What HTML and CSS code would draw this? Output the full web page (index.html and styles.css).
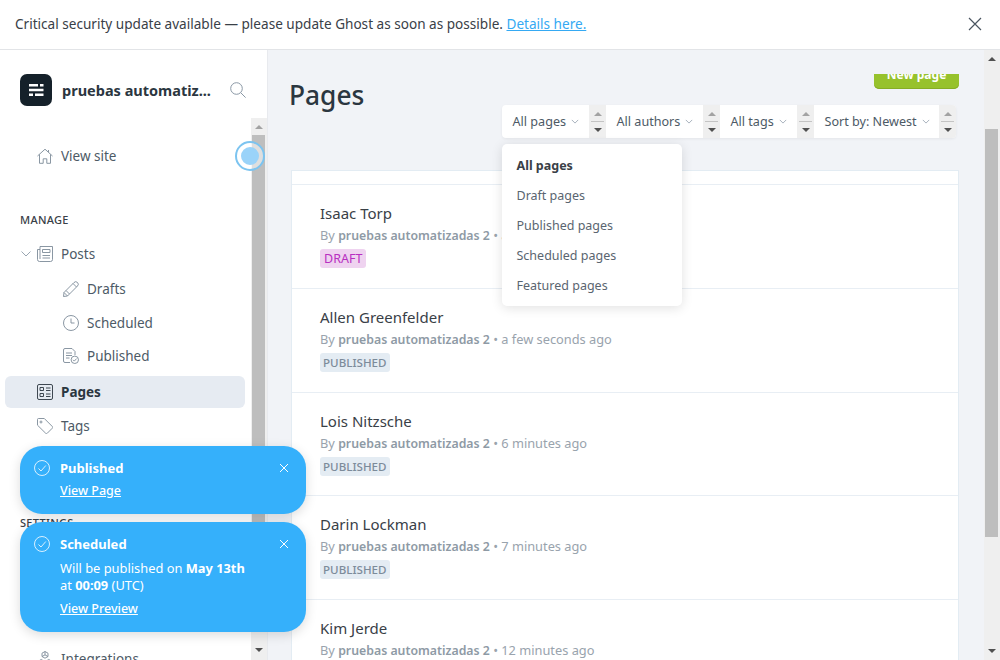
FILE: index.html
```html
<!DOCTYPE html>
<html lang="en">
<head>
<meta charset="utf-8">
<title>Pages</title>
<link rel="stylesheet" href="styles.css">
</head>
<body>
<div class="app">
  <div class="banner">
    <p class="banner-text">Critical security update available — please update Ghost as soon as possible. <a href="#">Details here.</a></p>
    <svg class="banner-close" viewBox="0 0 14 14"><path d="M1 1l12 12M13 1L1 13"/></svg>
  </div>
  <div class="shell">
    <aside class="sidebar">
      <div class="brand">
        <div class="logo"><svg viewBox="0 0 32 32"><path d="M9 10h9v2.4H9zM20 10h3.5v2.4H20zM9 14.8h14.5v2.4H9zM9 19.6h4v2.4H9zM15 19.6h8.5v2.4H15z"/></svg></div>
        <span class="brand-name">pruebas automatiz...</span>
        <svg class="search" viewBox="0 0 16 16"><circle cx="6.5" cy="6.5" r="5.8"/><path d="M10.8 10.8l4.8 4.8"/></svg>
      </div>
      <div class="side-scroll">
        <nav class="nav">
          <a class="item view-site"><svg class="ico" viewBox="0 0 16 16"><path d="M.5 8L8 1.2 15.500 8M2.500 6.500v8.800h3.700v-4.500h3.600v4.500h3.700V6.500M11.500 2v2"/></svg>View site</a>
          <div class="label">MANAGE</div>
          <a class="item"><svg class="caret" viewBox="0 0 10 6"><path d="M.5.5L5 5 9.500.5"/></svg><svg class="ico" viewBox="0 0 16 16"><path d="M3 .5h12.500v13a2 2 0 0 1-2 2h-11a2 2 0 0 1-2-2V3.500H3M3 .5v12.500M5.500 3.500h7.500v3h-7.500zM5.500 9.500h7.500M5.500 12h7.500"/></svg>Posts</a>
          <a class="item sub"><svg class="ico" viewBox="0 0 16 16"><path d="M1 11.500L11 1.500a1.800 1.800 0 0 1 3.500 3.500L4.500 15 .5 15.500zM10 2.500l3.500 3.500M1 11.500l3.500 3.500M3 9.500l3.500 3.500"/></svg>Drafts</a>
          <a class="item sub"><svg class="ico" viewBox="0 0 16 16"><circle cx="8" cy="8" r="7.500"/><path d="M8 3.500V8h3.500"/></svg>Scheduled</a>
          <a class="item sub"><svg class="ico" viewBox="0 0 16 16"><path d="M7 14.500H2a1.500 1.500 0 0 1-1.500-1.500V2A1.500 1.500 0 0 1 2 .5h7L12 3.500V7M3 5h6M3 7.500h6M3 10h3.500"/><circle cx="11.800" cy="11.800" r="3.700"/><path d="M10 11.800l1.300 1.300 2.300-2.500"/></svg>Published</a>
          <a class="item active"><svg class="ico" viewBox="0 0 16 16"><rect x=".5" y=".5" width="15" height="15" rx="1.500"/><path d="M3 3.500h3.500v3H3zM3 9.500h3.500v3H3zM9 4h4.500M9 6.500h4.500M9 10h4.500M9 12.500h4.500"/></svg>Pages</a>
          <a class="item"><svg class="ico" viewBox="0 0 16 16"><path d="M.5 1.500a1 1 0 0 1 1-1h5.800l8 8a1.200 1.200 0 0 1 0 1.700l-5 5a1.200 1.200 0 0 1-1.700 0l-8.100-8z"/><circle cx="4" cy="4" r="1"/></svg>Tags</a>
          <div class="label label-settings">SETTINGS</div>
          <a class="item"><svg class="ico" viewBox="0 0 16 16"><path d="M8 .5l3 1.700v3.300L8 7.200 5 5.500V2.200zM5 5.500l3-1.600 3 1.600M8 3.900V.5M4.200 8.500l3 1.700v3.300l-3 1.700-3-1.700v-3.300zM11.800 8.500l3 1.700v3.300l-3 1.700-3-1.700v-3.300z"/></svg>Integrations</a>
        </nav>
        <div class="scrollbar scrollbar-side">
          <span class="arrow-up faded"></span>
          <div class="track track-side"><div class="thumb"></div></div>
          <span class="arrow-down"></span>
        </div>
      </div>
    </aside>
    <main class="main">
      <div class="content">
        <div class="head">
          <h1 class="title">Pages</h1>
          <div class="actions">
            <div class="new-clip"><button class="new-page">New page</button></div>
            <div class="filters">
              <div class="filter f-pages"><span>All pages</span><svg class="chev" viewBox="0 0 10 6"><path d="M1 1l4 4 4-4"/></svg></div>
              <div class="spin"><span class="arrow-up faded"></span><i class="spin-line"></i><span class="arrow-down"></span></div>
              <div class="filter f-authors"><span>All authors</span><svg class="chev" viewBox="0 0 10 6"><path d="M1 1l4 4 4-4"/></svg></div>
              <div class="spin"><span class="arrow-up faded"></span><i class="spin-line"></i><span class="arrow-down"></span></div>
              <div class="filter f-tags"><span>All tags</span><svg class="chev" viewBox="0 0 10 6"><path d="M1 1l4 4 4-4"/></svg></div>
              <div class="spin"><span class="arrow-up faded"></span><i class="spin-line"></i><span class="arrow-down"></span></div>
              <div class="filter f-sort"><span>Sort by: Newest</span><svg class="chev" viewBox="0 0 10 6"><path d="M1 1l4 4 4-4"/></svg></div>
              <div class="spin"><span class="arrow-up faded"></span><i class="spin-line"></i><span class="arrow-down"></span></div>
            </div>
          </div>
        </div>
        <div class="list">
          <div class="list-top"></div>
          <article class="row">
            <h3 class="row-title">Isaac Torp</h3>
            <p class="meta">By <b>pruebas automatizadas 2</b> • a few seconds ago</p>
            <span class="tag draft">DRAFT</span>
          </article>
          <article class="row">
            <h3 class="row-title">Allen Greenfelder</h3>
            <p class="meta">By <b>pruebas automatizadas 2</b> • a few seconds ago</p>
            <span class="tag">PUBLISHED</span>
          </article>
          <article class="row">
            <h3 class="row-title">Lois Nitzsche</h3>
            <p class="meta">By <b>pruebas automatizadas 2</b> • 6 minutes ago</p>
            <span class="tag">PUBLISHED</span>
          </article>
          <article class="row">
            <h3 class="row-title">Darin Lockman</h3>
            <p class="meta">By <b>pruebas automatizadas 2</b> • 7 minutes ago</p>
            <span class="tag">PUBLISHED</span>
          </article>
          <article class="row">
            <h3 class="row-title">Kim Jerde</h3>
            <p class="meta">By <b>pruebas automatizadas 2</b> • 12 minutes ago</p>
            <span class="tag">PUBLISHED</span>
          </article>
        </div>
      </div>
      <div class="scrollbar scrollbar-main">
        <span class="arrow-up"></span>
        <div class="track track-main"><div class="thumb"></div></div>
        <span class="arrow-down"></span>
      </div>
    </main>
  </div>

  <div class="dropdown">
    <a class="dd-item selected">All pages</a>
    <a class="dd-item">Draft pages</a>
    <a class="dd-item">Published pages</a>
    <a class="dd-item">Scheduled pages</a>
    <a class="dd-item">Featured pages</a>
  </div>

  <div class="cursor"><div class="cursor-dot"></div></div>

  <div class="toasts">
    <div class="toast">
      <svg class="toast-check" viewBox="0 0 16 16"><circle cx="8" cy="8" r="7.500"/><path d="M4.500 8.500l2.500 2.500 4.800-5.500"/></svg>
      <div class="toast-body">
        <div class="toast-title">Published</div>
        <a class="toast-link" href="#">View Page</a>
      </div>
      <svg class="toast-close" viewBox="0 0 10 10"><path d="M1 1l8 8M9 1L1 9"/></svg>
    </div>
    <div class="toast toast-tall">
      <svg class="toast-check" viewBox="0 0 16 16"><circle cx="8" cy="8" r="7.500"/><path d="M4.500 8.500l2.500 2.500 4.800-5.500"/></svg>
      <div class="toast-body">
        <div class="toast-title">Scheduled</div>
        <p class="toast-msg">Will be published on <b>May 13th</b><br>at <b>00:09</b> (UTC)</p>
        <a class="toast-link" href="#">View Preview</a>
      </div>
      <svg class="toast-close" viewBox="0 0 10 10"><path d="M1 1l8 8M9 1L1 9"/></svg>
    </div>
  </div>
</div>
</body>
</html>
```
FILE: styles.css
```css
* { box-sizing: border-box; }
html, body { margin: 0; padding: 0; height: 100%; overflow: hidden; }
body { font-family: "Noto Sans", "Open Sans", sans-serif; color: #394047; background: #fff; }
p, h1, h3 { margin: 0; }
a { color: inherit; text-decoration: none; }

.app { position: relative; width: 1000px; height: 660px; overflow: hidden; display: flex; flex-direction: column; }

/* banner */
.banner { height: 50px; flex: none; display: flex; align-items: center; justify-content: space-between; padding: 0 18px 2px 15px; border-bottom: 1px solid #e2e4e7; background: #fff; }
.banner-text { font-size: 13.580px; color: #394047; }
.banner-text a { color: #35a9f3; text-decoration: underline; }
.banner-close { width: 14px; height: 14px; fill: none; stroke: #4a5560; stroke-width: 1.2; }

.shell { flex: 1; display: flex; min-height: 0; }

/* sidebar */
.sidebar { width: 268px; flex: none; display: flex; flex-direction: column; background: #fff; border-right: 1px solid #e8eaee; }
.brand { height: 68px; flex: none; display: flex; align-items: center; padding: 12px 0 0 20px; }
.logo { width: 32px; height: 32px; background: #15212a; border-radius: 7px; flex: none; }
.logo svg { display: block; width: 32px; height: 32px; fill: #fff; }
.brand-name { margin-left: 10px; font-size: 14.5px; font-weight: 700; color: #2b3640; white-space: nowrap; width: 168px; }
.search { width: 16px; height: 16px; flex: none; fill: none; stroke: #8a98a5; stroke-width: 1; }

.side-scroll { flex: 1; min-height: 0; display: flex; }
.nav { flex: 1; min-width: 0; overflow: hidden; padding: 22px 6px 0 5px; }
.item { position: relative; display: flex; align-items: center; height: 32px; padding-left: 32px; font-size: 13.5px; color: #4d5a66; margin-bottom: 2px; border-radius: 6px; }
.item.sub { padding-left: 58px; height: 32px; margin-bottom: 1.5px; }
.item.active { background: #e6ebf2; font-weight: 700; color: #2b3640; margin-top: 3.500px; }
.ico { width: 16px; height: 16px; flex: none; margin-right: 8px; fill: none; stroke: #7d8b98; stroke-width: .9; }
.active .ico { stroke: #2b3640; }
.caret { position: absolute; left: 16px; top: 13px; width: 10px; height: 6px; fill: none; stroke: #9aa6b2; stroke-width: 1; }
.view-site { margin-bottom: 41px; }
.label { height: 14px; line-height: 14px; margin: 0 0 11px 15px; font-size: 11px; font-weight: 500; letter-spacing: .3px; color: #394047; }
.nav > .item:nth-of-type(2) { margin-bottom: 3px; }
.label-settings { margin-top: 74px; margin-bottom: 113px; }

/* scrollbars */
.scrollbar { flex: none; width: 16px; background: #efefef; display: flex; flex-direction: column; align-items: center; }
.track { flex: 1; min-height: 0; width: 100%; display: flex; flex-direction: column; padding: 0 2px 0 1px; }
.track-side { margin: 6px 0 5px; }
.thumb { background: #bebebe; }
.track-side .thumb { height: 400px; }
.scrollbar-main { height: 100%; }
.track-main { margin-top: 68px; margin-bottom: 112px; }
.track-main .thumb { height: 413px; }
.arrow-up, .arrow-down { display: block; width: 0; height: 0; border-left: 4px solid transparent; border-right: 4px solid transparent; flex: none; }
.arrow-up { border-bottom: 4px solid #505050; }
.arrow-down { border-top: 4px solid #505050; }
.arrow-up.faded { border-bottom-color: #a3a3a3; }
.scrollbar-side > .arrow-up { margin-top: 7px; }
.scrollbar-side > .arrow-down { margin-bottom: 8px; }
.scrollbar-main > .arrow-up { margin-top: 7px; }
.scrollbar-main > .arrow-down { margin-bottom: 7px; }

/* main */
.main { flex: 1; min-width: 0; display: flex; background: #f1f3f7; }
.content { flex: 1; min-width: 0; overflow: hidden; padding: 24px 25px 0 21px; }
.head { display: flex; justify-content: space-between; }
.title { font-size: 26.300px; font-weight: 500; color: #2b3640; line-height: 42px; }
.actions { display: flex; flex-direction: column; align-items: flex-end; }
.new-clip { height: 15px; overflow: hidden; display: flex; align-items: flex-end; width: 85px; }
.new-page { width: 85px; height: 30px; flex: none; border: 0; border-radius: 0 0 5px 5px; background: #97c22c; box-shadow: inset 0 -1px 0 #86ad25; color: #fff; font: 700 12px "Noto Sans", sans-serif; padding: 0; }
.filters { display: flex; height: 33px; margin-top: 16px; margin-right: 3px; background: #fff; border-radius: 4px; box-shadow: 0 1px 3px rgba(0,0,0,.06); overflow: hidden; }
.filter { display: flex; align-items: center; font-size: 12.600px; color: #4d5a66; padding: 0 0 0 10.500px; white-space: nowrap; }
.f-pages { width: 87px; }
.f-authors { width: 97px; }
.f-tags { width: 77px; }
.f-sort { width: 125px; }
.chev { width: 8px; height: 5px; margin-left: 5px; fill: none; stroke: #a5b0ba; stroke-width: 1.200; }
.spin { width: 17px; flex: none; background: #efefef; display: flex; flex-direction: column; align-items: center; padding-top: 7px; }
.spin-line { display: block; width: 13px; height: 1px; background: #c4c4c4; margin: 5px 0 6px; }

/* list */
.list { margin: 32px 0 0 2px; background: #fff; border: 1px solid #e3ecf3; border-bottom: 0; }
.list-top { height: 13px; }
.row { height: 103.750px; padding: 18px 28px 0; border-top: 1px solid #e8eef4; }
.row-title { font-size: 15px; font-weight: 400; color: #394047; line-height: 20px; }
.meta { font-size: 12.800px; line-height: 18px; color: #99a3ad; margin-top: 3px; }
.meta b { font-weight: 600; font-size: 12.300px; color: #8e9aa5; }
.tag { display: inline-block; margin-top: 4px; height: 19px; line-height: 19px; padding: 0 3px; font-size: 11.600px; font-weight: 500; color: #7c8b9a; background: #e4ecf3; border-radius: 3px; }
.tag.draft { color: #b82fc1; background: #efd3f0; font-size: 12.500px; font-weight: 400; padding: 0 4px; }

/* dropdown */
.dropdown { position: absolute; left: 502px; top: 144px; width: 180px; height: 162px; padding: 7px 0 5px; background: #fff; border-radius: 5px; box-shadow: 0 2px 12px rgba(0,0,0,.12); }
.dd-item { display: block; height: 30px; line-height: 30px; padding-left: 14.500px; font-size: 12.500px; color: #5a6570; }
.dd-item.selected { font-weight: 700; color: #394047; }

/* cursor */
.cursor { position: absolute; left: 235px; top: 141px; width: 30px; height: 30px; border: 2px solid #7cc4f0; border-radius: 50%; background: rgba(255,255,255,.5); display: flex; align-items: center; justify-content: center; }
.cursor-dot { width: 18px; height: 18px; border-radius: 50%; background: #9ad3f9; }

/* toasts */
.toasts { position: absolute; left: 20px; top: 446px; width: 286px; display: flex; flex-direction: column; gap: 8px; }
.toast { position: relative; display: flex; padding: 12px 14px 15px; background: #35b0fb; color: #fff; border-radius: 22px; box-shadow: 0 3px 12px rgba(0,0,0,.14); }
.toast-tall { min-height: 110px; }
.toast-check { width: 16px; height: 16px; flex: none; margin: 2px 10px 0 0; fill: none; stroke: #fff; stroke-width: .9; opacity: .9; }
.toast-body { flex: 1; min-width: 0; font-size: 12.500px; line-height: 17px; }
.toast-title { font-size: 13px; font-weight: 700; line-height: 20px; }
.toast-link { display: inline-block; margin-top: 4px; color: #fff; text-decoration: underline; font-weight: 500; }
.toast-msg { margin-top: 6px; margin-bottom: 2px; font-size: 12.850px; }
.toast-msg b { font-weight: 700; }
.toast-close { position: absolute; right: 17px; top: 17px; width: 10px; height: 10px; fill: none; stroke: #fff; stroke-width: 1; }
```
